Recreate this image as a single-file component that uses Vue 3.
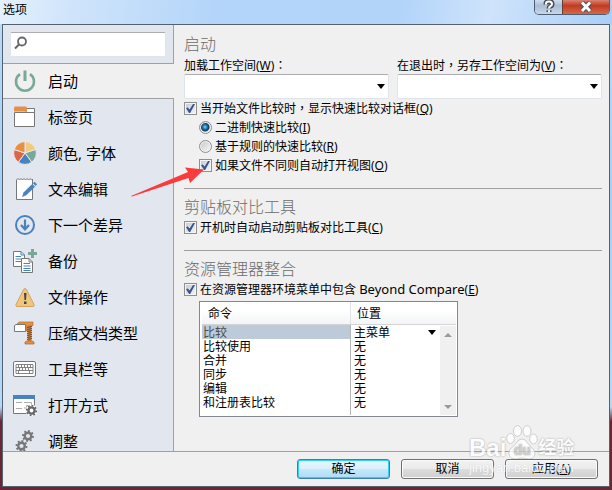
<template>
  <div class="window">
    <header class="titlebar">
      <span class="titlebar__text">选项</span>
      <div class="titlebar__buttons">
        <button type="button" class="caption-btn caption-btn--help" aria-label="帮助">
          <svg width="12" height="14" viewBox="0 0 12 14">
            <path d="M3 4.5V3.5Q3 1.5 6 1.5T9 4Q9 5.5 7.5 6.2Q6 7 6 8.6M6 10.3V12" class="glyph-edge" />
            <path d="M3 4.5V3.5Q3 1.5 6 1.5T9 4Q9 5.5 7.5 6.2Q6 7 6 8.6M6 10.3V12" class="glyph" />
          </svg>
        </button>
        <button type="button" class="caption-btn caption-btn--close" aria-label="关闭">
          <svg width="14" height="12" viewBox="0 0 14 12">
            <path d="M3 1.5L11 10M11 1.5L3 10" class="glyph-edge" />
            <path d="M3 1.5L11 10M11 1.5L3 10" class="glyph glyph--bold" />
          </svg>
        </button>
      </div>
    </header>

    <div class="client">
      <div class="body">
        <aside class="sidebar">
          <div class="search">
            <svg class="search__icon" width="14" height="14" viewBox="0 0 14 14">
              <circle cx="8" cy="5.5" r="4" fill="none" stroke="#666" stroke-width="1.8" />
              <path d="M5 8.5L1 12.5" stroke="#666" stroke-width="2" />
            </svg>
            <input v-model="search" type="text" class="search__input" aria-label="搜索" />
          </div>
          <nav class="nav">
            <button
              v-for="item in navItems"
              :key="item.icon"
              type="button"
              class="nav__item"
              :class="{ 'nav__item--active': item.icon === activePage }"
              @click="activePage = item.icon"
            >
              <svg class="nav__icon" width="24" height="24" viewBox="0 0 24 24">
                <g v-if="item.icon === 'power'" fill="none" stroke="#78a898">
                  <path d="M7 5.2A9 9 0 1 0 17 5.2" stroke-width="2.6" />
                  <path d="M12 1.5V12" stroke-width="3" />
                </g>
                <g v-else-if="item.icon === 'tabs'">
                  <path d="M13 3.5H21.5V8H13z" fill="#fff" stroke="#777" />
                  <path d="M1.5 7.5H21.5V21.5H1.5z" fill="#fff" stroke="#777" />
                  <path d="M1 2.5L2 1.5H13L14 2.5V6.5H1z" fill="#e78f45" />
                </g>
                <g v-else-if="item.icon === 'colors'" stroke="#e8e9ed" stroke-width="1">
                  <path d="M12 12V.6A11.4 11.4 0 0 1 22.8 8.5z" fill="#f0cb80" />
                  <path d="M12 12L22.8 8.5A11.4 11.4 0 0 1 18.7 21.2z" fill="#78a898" />
                  <path d="M12 12L18.7 21.2A11.4 11.4 0 0 1 5.3 21.2z" fill="#4a82bd" />
                  <path d="M12 12L5.3 21.2A11.4 11.4 0 0 1 1.2 8.5z" fill="#dc6644" />
                  <path d="M12 12L1.2 8.5A11.4 11.4 0 0 1 12 .6z" fill="#e78f45" />
                </g>
                <g v-else-if="item.icon === 'edit'">
                  <path d="M3.500 3L5 1.500L6.500 3L8 1.500L9.500 3L11 1.500L12.500 3L14 1.500L15.500 3L17 1.500L18.500 3L19.500 2V22.500H3.500z" fill="#fff" stroke="#777" />
                  <path d="M9 20L10.500 15.500L19.200 7L22 9.800L13.300 18.300z" fill="#4a82bd" />
                  <path d="M20 6.200L21.500 4.700L24 7.200L22.700 8.900z" fill="#4a82bd" />
                </g>
                <g v-else-if="item.icon === 'next'" fill="none" stroke="#4a82bd">
                  <circle cx="12" cy="12" r="9" stroke-width="2" />
                  <path d="M12 6.5V16M8 12L12 16.3L16 12" stroke-width="2.2" />
                </g>
                <g v-else-if="item.icon === 'backup'">
                  <path d="M.5 2.5H8L11.5 6V17.500H.5z" fill="#fff" stroke="#777" />
                  <path d="M8 2.5V6H11.5M2.5 7.5H8M2.5 10H8M2.5 12.5H8" fill="none" stroke="#4a82bd" />
                  <path d="M8.5 9.5H16L19.5 13V23.5H8.5z" fill="#fff" stroke="#777" />
                  <path d="M16 9.5V13H19.5" fill="none" stroke="#777" />
                  <path d="M10.5 14.5H17M10.5 17H17.5M10.5 19.5H17.5M10.5 21.5H17.5" stroke="#4a82bd" />
                  <path d="M19.5 0V9M15 4.5H24" stroke="#78a898" stroke-width="3" />
                </g>
                <g v-else-if="item.icon === 'warning'">
                  <path d="M12 3.5Q13 3.5 13.7 5L21 19.5Q21.5 21.5 20 21.5H4Q2.5 21.5 3 19.5L10.3 5Q11 3.5 12 3.5z" fill="#edc77e" stroke="#d5a35d" />
                  <path d="M11 8H13.5L13 15H11.5zM11 16.5H13.5V19H11z" fill="#444" />
                </g>
                <g v-else-if="item.icon === 'archive'">
                  <path d="M3 4L6 1H20V4.5L17 5V10H13V4z" fill="#e78f45" stroke="#b96f2a" stroke-width=".7" />
                  <path d="M16.5 4V21" stroke="#d68139" stroke-width="4" />
                  <path d="M14 6.5L19 5.5M14 8.5L19 7.5M14 10.5L19 9.5M14 12.5L19 11.5M14 14.5L19 13.5M14 16.5L19 15.5M14 18.5L19 17.5" stroke="#5d432f" stroke-width=".9" />
                  <path d="M12 21L14 20H19L21 21V23H12z" fill="#e78f45" stroke="#a8652a" stroke-width=".7" />
                  <path d="M1.5 4.5L3 3.5H12.5V10.5H1.5z" fill="#fff" stroke="#777" />
                </g>
                <g v-else-if="item.icon === 'keyboard'" fill="none" stroke="#777">
                  <rect x=".5" y="4.5" width="22" height="15" rx="1.5" fill="#fff" />
                  <path d="M3 7.5H20V16.5H3zM3 10.5H20M3 13.5H20M5.5 7.5V10.5M8.5 7.5V10.5M11.5 7.5V10.5M14.5 7.5V10.5M17.5 7.5V10.5M6.5 10.5V13.5M9.5 10.5V13.5M12.5 10.5V13.5M15.5 10.5V13.5M5.5 13.5V16.5M16.5 13.5V16.5" stroke-width=".9" />
                </g>
                <g v-else-if="item.icon === 'openwith'">
                  <path d="M.5 2.5H21.5V20.5H.5z" fill="#fff" stroke="#777" />
                  <path d="M0 2H22V6H0z" fill="#4a82bd" />
                  <path d="M3 9.5H9M3 15.5H9M11 9.5H18.5V12M11 15H13.5V12.5H16" fill="none" stroke="#aaa" />
                  <circle cx="18.5" cy="17.5" r="6" fill="#fff" />
                  <circle cx="18.5" cy="17.5" r="3.1" fill="none" stroke="#666" stroke-width="2.4" />
                  <circle cx="18.5" cy="17.5" r="4.8" fill="none" stroke="#666" stroke-width="1.8" pathLength="16" stroke-dasharray="1 1" />
                </g>
                <g v-else fill="none" stroke="#777">
                  <circle cx="15" cy="7" r="3.3" stroke-width="2.4" />
                  <circle cx="15" cy="7" r="5" stroke-width="1.9" pathLength="16" stroke-dasharray="1 1" />
                  <circle cx="8.5" cy="17" r="3.3" stroke-width="2.4" />
                  <circle cx="8.5" cy="17" r="5" stroke-width="1.9" pathLength="16" stroke-dasharray="1 1" />
                </g>
              </svg>
              <span>{{ item.label }}</span>
            </button>
          </nav>
        </aside>

        <main class="content">
          <section class="section">
            <h2 class="section__title">启动</h2>
            <div class="fields">
              <div class="field">
                <label for="load-workspace">加载工作空间(<u>W</u>)<span class="colon">：</span></label>
                <div class="combo">
                  <select id="load-workspace" class="combo__select"><option></option></select>
                </div>
              </div>
              <div class="field">
                <label for="save-workspace">在退出时<span class="colon">，</span>另存工作空间为(<u>V</u>)<span class="colon">：</span></label>
                <div class="combo">
                  <select id="save-workspace" class="combo__select"><option></option></select>
                </div>
              </div>
            </div>
            <label class="check">
              <input v-model="showQuick" type="checkbox" class="box" />
              <span>当开始文件比较时<span class="colon">，</span>显示快速比较对话框(<u>Q</u>)</span>
            </label>
            <div class="nested">
              <label class="check">
                <input v-model="quickMode" type="radio" name="quick" value="binary" class="dot" />
                <span>二进制快速比较(<u>I</u>)</span>
              </label>
              <label class="check">
                <input v-model="quickMode" type="radio" name="quick" value="rules" class="dot" />
                <span>基于规则的快速比较(<u>R</u>)</span>
              </label>
              <label class="check">
                <input v-model="autoOpen" type="checkbox" class="box" />
                <span>如果文件不同则自动打开视图(<u>O</u>)</span>
              </label>
            </div>
          </section>

          <section class="section">
            <h2 class="section__title">剪贴板对比工具</h2>
            <label class="check">
              <input v-model="clipboardTool" type="checkbox" class="box" />
              <span>开机时自动启动剪贴板对比工具(<u>C</u>)</span>
            </label>
          </section>

          <section class="section">
            <h2 class="section__title">资源管理器整合</h2>
            <label class="check">
              <input v-model="explorerMenu" type="checkbox" class="box" />
              <span>在资源管理器环境菜单中包含 <span class="latin">Beyond Compare</span>(<u>E</u>)</span>
            </label>
            <div class="commands">
              <table class="commands__table">
                <thead>
                  <tr><th>命令</th><th>位置</th></tr>
                </thead>
                <tbody>
                  <tr v-for="(row, index) in commands" :key="row" :class="{ selected: index === 0 }">
                    <td>{{ row }}</td>
                    <td>
                      <div v-if="index === 0" class="combo combo--cell">
                        <select class="combo__select" aria-label="位置">
                          <option>主菜单</option>
                          <option>无</option>
                        </select>
                      </div>
                      <template v-else>无</template>
                    </td>
                  </tr>
                </tbody>
              </table>
              <div class="scrollbar">
                <button type="button" class="scrollbar__btn scrollbar__btn--up" aria-label="向上"></button>
                <button type="button" class="scrollbar__btn scrollbar__btn--down" aria-label="向下"></button>
              </div>
            </div>
          </section>
        </main>
      </div>

      <footer class="footer">
        <button type="button" class="btn btn--default">确定</button>
        <button type="button" class="btn">取消</button>
        <button type="button" class="btn">应用(<u>A</u>)</button>
      </footer>
    </div>

    <svg class="arrow" width="76" height="32" viewBox="0 0 76 32">
      <path d="M0 29L57 5L54 .5L73 2.500L59 16L57.500 11L1 29.500z" fill="#fb3b3b" />
    </svg>

    <div class="watermark">
      <div class="watermark__brand">
        <span class="watermark__bai">Bai</span>
        <span class="watermark__paw">
          <svg width="32" height="34" viewBox="0 0 32 34">
            <g fill="#fff" stroke="#bbb" stroke-width=".8">
              <ellipse cx="4.5" cy="13.5" rx="3.8" ry="5" />
              <ellipse cx="11.5" cy="6" rx="4" ry="5.3" />
              <ellipse cx="21" cy="6" rx="4" ry="5.3" />
              <ellipse cx="27.5" cy="14" rx="3.8" ry="5" />
              <path d="M16 14Q19.5 14 21.5 18L28 25Q31 33 23 34Q16 32 9 34Q1 33 3.5 25L10.5 18Q12.5 14 16 14z" />
            </g>
          </svg>
          <span class="watermark__du">du</span>
        </span>
        <span class="watermark__cn">经验</span>
      </div>
      <div class="watermark__url">jingyan.baidu.com</div>
    </div>
  </div>
</template>

<script setup>
import { ref } from 'vue'

const search = ref('')
const activePage = ref('power')
const showQuick = ref(true)
const quickMode = ref('binary')
const autoOpen = ref(true)
const clipboardTool = ref(true)
const explorerMenu = ref(true)

const navItems = [
  { icon: 'power', label: '启动' },
  { icon: 'tabs', label: '标签页' },
  { icon: 'colors', label: '颜色, 字体' },
  { icon: 'edit', label: '文本编辑' },
  { icon: 'next', label: '下一个差异' },
  { icon: 'backup', label: '备份' },
  { icon: 'warning', label: '文件操作' },
  { icon: 'archive', label: '压缩文档类型' },
  { icon: 'keyboard', label: '工具栏等' },
  { icon: 'openwith', label: '打开方式' },
  { icon: 'tweaks', label: '调整' }
]

const commands = ['比较', '比较使用', '合并', '同步', '编辑', '和注册表比较']
</script>

<style>
body {
  margin: 0;
}
</style>

<style scoped>
.window,
.window * {
  box-sizing: border-box;
}

.window {
  position: relative;
  height: 100vh;
  display: flex;
  flex-direction: column;
  padding: 0 2px 3px;
  overflow: hidden;
  font-family: "Noto Sans", "Noto Sans CJK SC", sans-serif;
  font-size: 12px;
  line-height: 16px;
  color: #000;
  background: linear-gradient(#b9dcf8 0, #a5cff5 40%, #b4d9f7 83%, #6a2633 86%, #6a2633 100%);
}

button,
select,
input {
  font: inherit;
  color: inherit;
}

.titlebar {
  display: flex;
  justify-content: space-between;
  align-items: flex-start;
  height: 24px;
  margin: 0 -2px;
  padding-left: 3px;
  background: linear-gradient(100deg, #e4f1fd 0, #cfe4fb 12%, #b4d5f9 35%, #b2d4f9 65%, #cfe3fb 80%, #a9cff7 100%);
}

.titlebar__text {
  line-height: 19px;
}

.titlebar__buttons {
  display: flex;
  height: 15px;
  margin-right: 2px;
  border: 1px solid #4e5f75;
  border-top: 0;
  border-radius: 0 0 5px 5px;
  overflow: hidden;
}

.caption-btn {
  display: flex;
  justify-content: center;
  align-items: center;
  padding: 0;
  border: 0;
}

.caption-btn--help {
  width: 27px;
  background: linear-gradient(#d0dfee 0, #a9bdd3 40%, #c6d7e8 100%);
}

.caption-btn--close {
  width: 47px;
  border-left: 1px solid #6b3c3c;
  background: linear-gradient(#d88473 0, #c23a22 40%, #d5694a 100%);
}

.glyph-edge {
  fill: none;
  stroke: #4a4f5c;
  stroke-width: 5;
}

.glyph {
  fill: none;
  stroke: #fff;
  stroke-width: 2;
}

.glyph--bold {
  stroke-width: 3;
}

.client {
  flex: 1;
  min-height: 0;
  display: flex;
  flex-direction: column;
  border: 1px solid #55616f;
  background: #f0f0f0;
}

.body {
  flex: 1;
  min-height: 0;
  display: flex;
}

.sidebar {
  flex: none;
  width: 171px;
  display: flex;
  flex-direction: column;
  background: linear-gradient(90deg, #e2e6ee 170px, #a0a0a0 170px);
}

.search {
  position: relative;
  flex: none;
  padding: 7px 8px 6px 7px;
}

.search__input {
  display: block;
  width: 100%;
  height: 25px;
  padding: 0 6px 0 22px;
  border: 1px solid #dfe3ea;
  border-top-color: #abadb3;
  border-radius: 2px;
  background: #fff;
}

.search__icon {
  position: absolute;
  top: 11px;
  left: 11px;
}

.nav {
  flex: 1;
  min-height: 0;
  overflow: hidden;
}

.nav__item {
  display: flex;
  align-items: center;
  gap: 11px;
  width: 100%;
  height: 36px;
  padding: 0 0 0 10px;
  border: 0;
  background: transparent;
  font-size: 15px;
  line-height: 20px;
  text-align: left;
}

.nav__item--active {
  border-top: 1px solid #a0a0a0;
  border-bottom: 1px solid #a0a0a0;
  background: #f0f0f0;
}

.nav__icon {
  flex: none;
}

.content {
  flex: 1;
  min-width: 0;
  padding: 1px 7px 0 10px;
}

.section {
  padding: 8px 0 13px;
  border-bottom: 1px solid #a0a0a0;
}

.section:last-child {
  border-bottom: 0;
}

.section__title {
  margin: 0 0 1px;
  font-size: 16px;
  font-weight: 300;
  line-height: 20px;
  color: #6b6b6b;
}

.fields {
  display: grid;
  grid-template-columns: 1fr 1fr;
  gap: 8px;
  padding-top: 2px;
}

.field label {
  display: block;
  white-space: nowrap;
}

/* full-width punctuation centred in its cell */
.colon {
  font-family: "Noto Sans CJK TC", sans-serif;
}

.combo {
  position: relative;
}

.combo::after {
  content: "";
  position: absolute;
  top: 10px;
  right: 4px;
  border: 4px solid transparent;
  border-top: 5px solid #000;
  border-bottom: 0;
  pointer-events: none;
}

.combo__select {
  display: block;
  appearance: none;
  width: 100%;
  height: 25px;
  padding: 0 16px 0 4px;
  border: 1px solid #dfe3ea;
  border-top-color: #abadb3;
  border-radius: 2px;
  background: #fff;
}

.combo--cell .combo__select {
  height: 13px;
  padding: 0 16px 0 0;
  border: 0;
  line-height: 13px;
}

.combo--cell::after {
  top: 4px;
  right: 20px;
}

.check {
  display: flex;
  align-items: center;
  gap: 3px;
  height: 19px;
  white-space: nowrap;
}

.nested {
  padding-left: 15px;
}

.box,
.dot {
  flex: none;
  appearance: none;
  width: 13px;
  height: 13px;
  margin: 0;
  border: 1px solid #8e8f8f;
}

.box {
  background: linear-gradient(135deg, #c4cad2, #f4f6f8);
  box-shadow: inset 0 0 0 1px #f4f4f4;
}

.box:checked::before {
  content: "";
  display: block;
  width: 9px;
  height: 9px;
  margin: 1px;
  background: #3d538f;
  clip-path: polygon(0 45%, 20% 38%, 40% 62%, 78% 0, 100% 0, 46% 100%, 34% 100%);
}

.dot {
  border-radius: 50%;
  background: linear-gradient(135deg, #c4c8cc, #f8f8f8);
  box-shadow: inset 0 0 0 1px #f0f0f0;
}

.dot:checked {
  background: radial-gradient(circle at 5px 5px, #8fd8f3 0, #2380b0 2px, #0d3556 4px, #dfe5ea 5px);
}

.latin {
  font-size: 13px;
}

.commands {
  position: relative;
  width: 259px;
  margin: 2px 0 0 15px;
  padding: 0 1px 1px 2px;
  border: 1px solid #828790;
  background: #fff;
}

.commands__table {
  width: 100%;
  border-collapse: separate;
  border-spacing: 0;
  table-layout: fixed;
}

.commands__table th {
  height: 23px;
  padding: 1px 0 0 6px;
  border-right: 1px solid #dfe1e6;
  border-bottom: 1px solid #d5d5d5;
  background: linear-gradient(#fff 40%, #f2f4f7);
  font-weight: 400;
  text-align: left;
}

.commands__table th:first-child {
  width: 149px;
}

.commands__table th:last-child {
  border-right: 0;
}

.commands__table td {
  height: 14px;
  padding: 1px 0 0 3px;
  line-height: 13px;
  vertical-align: top;
}

.commands__table td:first-child {
  padding-left: 1px;
  border-right: 1px solid #b5b5b5;
}

.commands__table tr:last-child td {
  height: 20px;
}

.commands__table .selected td:first-child {
  background: #bccad9;
  color: #4d4d4d;
}

.scrollbar {
  position: absolute;
  top: 24px;
  right: 1px;
  bottom: 1px;
  width: 16px;
  display: flex;
  flex-direction: column;
  justify-content: space-between;
  background: #f0f0f0;
}

.scrollbar__btn {
  display: flex;
  justify-content: center;
  align-items: center;
  height: 17px;
  padding: 0;
  border: 0;
  background: transparent;
}

.scrollbar__btn::before {
  content: "";
  border: 4px solid transparent;
}

.scrollbar__btn--up::before {
  border-top: 0;
  border-bottom-color: #999;
}

.scrollbar__btn--down::before {
  border-bottom: 0;
  border-top-color: #999;
}

.footer {
  display: flex;
  justify-content: flex-end;
  gap: 11px;
  padding: 7px 11px;
  border-top: 1px solid #a0a0a0;
}

.btn {
  width: 93px;
  height: 20px;
  padding: 0;
  border: 1px solid #707070;
  border-radius: 3px;
  background: linear-gradient(#f2f2f2 0, #ebebeb 50%, #dddddd 51%, #cfcfcf 100%);
  box-shadow: inset 0 0 0 1px #fafafa;
  line-height: 16px;
}

.btn--default {
  border-color: #3c7fb1;
  background: linear-gradient(#eaf6fd 0, #d9f0fc 50%, #c5e8fa 51%, #addcf4 100%);
  box-shadow: inset 0 0 0 1px #2fd0fb;
}

.arrow {
  position: absolute;
  top: 167px;
  left: 131px;
  pointer-events: none;
}

.watermark {
  position: absolute;
  right: 33px;
  bottom: 13px;
  width: 110px;
  color: #fff;
  opacity: 0.8;
  pointer-events: none;
}

.watermark__brand {
  display: flex;
  align-items: flex-end;
  height: 36px;
  text-shadow: 0 0 2px #888;
}

.watermark__bai {
  font: bold 24px/22px "Liberation Sans", sans-serif;
}

.watermark__paw {
  position: relative;
}

.watermark__paw svg {
  display: block;
}

.watermark__du {
  position: absolute;
  right: 0;
  bottom: 1px;
  left: 0;
  font: bold 14px/16px "Liberation Sans", sans-serif;
  text-align: center;
  color: #c8c8c8;
}

.watermark__cn {
  font-size: 18px;
  font-weight: 700;
  line-height: 24px;
}

.watermark__url {
  font: 13px/18px "Liberation Sans", sans-serif;
  text-shadow: 0 0 1px #bbb;
}
</style>
